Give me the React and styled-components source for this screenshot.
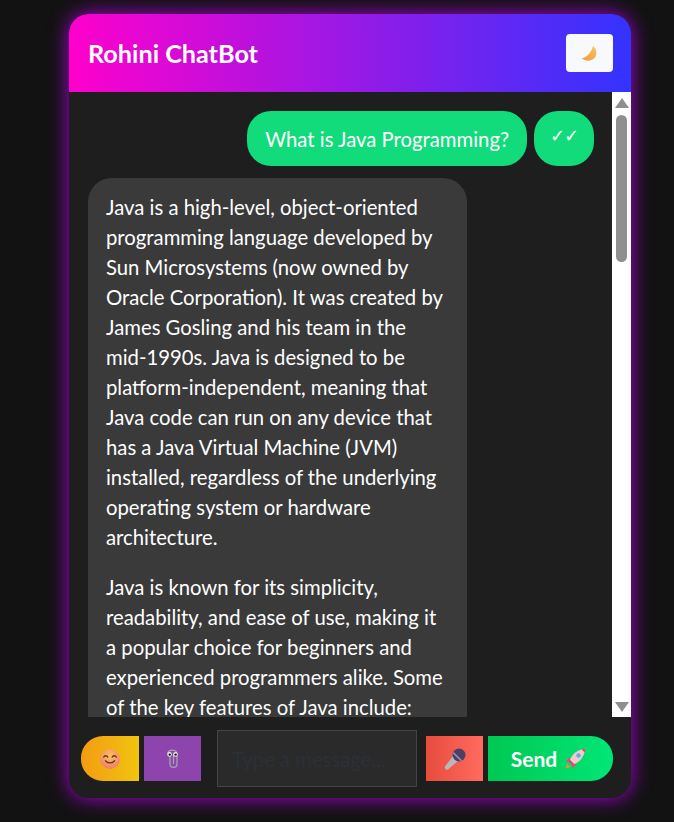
import React from "react";
import styled, { createGlobalStyle } from "styled-components";

const GlobalStyle = createGlobalStyle`
  html, body {
    margin: 0;
    height: 100%;
    background: #121212;
    overflow: hidden;
    font-family: "Lato", "Noto Sans", "Liberation Sans", sans-serif;
  }
`;

const Page = styled.div`
  height: 822px;
  padding: 14px 0 0 69px;
  box-sizing: border-box;
`;

const Card = styled.div`
  width: 562px;
  height: 784px;
  display: flex;
  flex-direction: column;
  border-radius: 20px;
  overflow: hidden;
  background: #1e1e1e;
  box-shadow: 0 0 20px #a800d8;
`;

const Header = styled.header`
  flex: 0 0 78px;
  display: flex;
  align-items: center;
  justify-content: space-between;
  padding: 0 18px 0 19px;
  background: linear-gradient(90deg, #ff00cc, #3333ff);
`;

const Title = styled.h1`
  margin: 0;
  font-size: 25.2px;
  font-weight: 700;
  color: #fff;
`;

const ThemeButton = styled.button`
  width: 47px;
  height: 38px;
  border: 0;
  border-radius: 4px;
  background: #f8f9fa;
  padding: 0;
  display: flex;
  align-items: center;
  justify-content: center;
`;

const Body = styled.div`
  flex: 1;
  min-height: 0;
  display: flex;
`;

const Messages = styled.div`
  flex: 1;
  min-width: 0;
  overflow: hidden;
  padding: 19px 18px 0 19px;
  color: #fff;
  font-size: 20.3px;
  line-height: 30px;
`;

const ScrollTrack = styled.div`
  flex: 0 0 19px;
  display: flex;
  flex-direction: column;
  align-items: center;
  background: #fff;
  padding: 6px 0 5px;
  box-sizing: border-box;
`;

const Arrow = styled.div`
  width: 0;
  height: 0;
  border-left: 7px solid transparent;
  border-right: 7px solid transparent;
  border-${(p) => (p.$up ? "bottom" : "top")}: 10px solid #8f8f8f;
`;

const ScrollSpace = styled.div`
  flex: 1;
  align-self: stretch;
  padding: 7px 4px 0;
`;

const Thumb = styled.div`
  height: 147px;
  border-radius: 6px;
  background: #8f8f8f;
`;

const UserRow = styled.div`
  display: flex;
  justify-content: flex-end;
  gap: 7px;
  margin: 0 0 12px;
`;

const GreenBubble = styled.div`
  height: 55px;
  box-sizing: border-box;
  padding: 0 18px;
  border-radius: 24px;
  background: #12db7c;
  display: flex;
  align-items: center;
`;

const Ticks = styled(GreenBubble)`
  width: 60px;
  justify-content: center;
  padding: 0 0 8px;
  font-size: 18px;
  letter-spacing: -1px;
`;

const BotBubble = styled.div`
  width: 379px;
  box-sizing: border-box;
  padding: 14px 18px 18px;
  border-radius: 24px;
  background: #3a3a3a;

  p {
    margin: 0 0 20px;
  }
`;

const Footer = styled.form`
  flex: 0 0 81px;
  box-sizing: border-box;
  display: flex;
  align-items: center;
  padding: 2px 18px 0 12px;
`;

const ToolButton = styled.button`
  width: ${(p) => p.$w || 57}px;
  height: 45px;
  border: 0;
  padding: 0;
  font-family: inherit;
  margin-right: 5px;
  background: ${(p) => p.$bg};
  border-radius: ${(p) => p.$radius || 0};
  display: flex;
  align-items: center;
  justify-content: center;
`;

const Input = styled.input`
  width: 200px;
  height: 57px;
  box-sizing: border-box;
  margin: 0 9px 0 11px;
  padding: 0 14px;
  background: #2a2a2a;
  border: 1px solid #444;
  font-family: inherit;
  font-size: 20.3px;
  &::placeholder {
    color: #2a3038;
  }
`;

const SendButton = styled(ToolButton)`
  color: #fff;
  font-size: 21px;
  font-weight: 700;
  gap: 8px;
  margin: 0;
  padding-right: 4px;
`;

const MoonIcon = () => (
  <svg width="17" height="17" viewBox="0 0 17 17">
    <defs>
      <linearGradient id="moon" x1="0" y1="1" x2="1" y2="0">
        <stop offset="0" stopColor="#f2993a" />
        <stop offset="1" stopColor="#fbc564" />
      </linearGradient>
    </defs>
    <path d="M0.5 13.2C5 13 10 8.5 12 1c3.5 3 4.6 8 2 11.6C11 16.6 4.5 16.6 0.5 13.2Z" fill="url(#moon)" />
  </svg>
);

const SmileIcon = () => (
  <svg width="20" height="20" viewBox="0 0 20 20">
    <defs>
      <radialGradient id="face" cx="0.5" cy="0.35" r="0.7">
        <stop offset="0" stopColor="#fdc35c" />
        <stop offset="1" stopColor="#f0786c" />
      </radialGradient>
    </defs>
    <circle cx="10" cy="10" r="10" fill="url(#face)" />
    <g fill="none" stroke="#5a3528" strokeWidth="1.4" strokeLinecap="round">
      <path d="M3.8 8C4.6 6.3 7 6.3 7.8 8" />
      <path d="M12.2 8C13 6.3 15.4 6.3 16.2 8" />
      <path d="M5.5 11.8C7.5 14.6 12.5 14.6 14.5 11.8" />
    </g>
  </svg>
);

const ClipIcon = () => (
  <svg width="14" height="22" viewBox="0 0 14 22">
    <g fill="none" stroke="#a5a5a8" strokeWidth="1.3" strokeLinecap="round">
      <path d="M4 6V16C4 20.5 11 20.5 11 16V6.5C11 1 3 0.5 1.5 5.5" />
      <path d="M7.5 7V15.5" />
    </g>
    <circle cx="3.6" cy="6.4" r="2.3" fill="#e8e8e8" />
    <circle cx="9.4" cy="6.4" r="2.3" fill="#e8e8e8" />
    <circle cx="3.8" cy="6.6" r="1.2" fill="#1c1c20" />
    <circle cx="9.6" cy="6.6" r="1.2" fill="#1c1c20" />
  </svg>
);

const MicIcon = () => (
  <svg width="22" height="22" viewBox="0 0 22 22">
    <path d="M9 8L14 13L4 21.5Q2.6 22 1.5 21Q0.6 20 1 18.6Z" fill="#b9b6bc" />
    <circle cx="15" cy="7" r="6.5" fill="#4b3f63" />
    <path d="M9.2 4.6L17.4 12.8" stroke="#9a8fb0" strokeWidth="1.6" />
  </svg>
);

const RocketIcon = () => (
  <svg width="21" height="21" viewBox="0 0 21 21">
    <path d="M0.5 20.5L2 15.5L5.5 19Z" fill="#f0922e" />
    <path d="M4.5 9.5L1 13.5L6 15Z" fill="#f0447a" />
    <path d="M11.5 16.5L7.5 20L6 15Z" fill="#f0447a" />
    <path d="M5 12C7 6 12 2 20.5 0.5C19 9 15 14 9 16Z" fill="#f4c8d2" />
    <path d="M16.5 1.3L20.5 0.5L19.7 4.5Z" fill="#f2405e" />
    <path d="M5 12L9 16L7 16.5L4.5 14Z" fill="#ee3a72" />
    <circle cx="13.5" cy="7.5" r="2.2" fill="#6fa4e8" />
  </svg>
);

export default function App() {
  return (
    <Page>
      <GlobalStyle />
      <Card>
        <Header>
          <Title>Rohini ChatBot</Title>
          <ThemeButton type="button" aria-label="Toggle theme"><MoonIcon /></ThemeButton>
        </Header>
        <Body>
          <Messages>
            <UserRow>
              <GreenBubble>What is Java Programming?</GreenBubble>
              <Ticks>✓✓</Ticks>
            </UserRow>
            <BotBubble>
              <p>
                Java is a high-level, object-oriented programming language developed by Sun
                Microsystems (now owned by Oracle Corporation). It was created by James Gosling and
                his team in the mid-1990s. Java is designed to be platform-independent, meaning that
                Java code can run on any device that has a Java Virtual Machine (JVM) installed,
                regardless of the underlying operating system or hardware architecture.
              </p>
              <p>
                Java is known for its simplicity, readability, and ease of use, making it a popular
                choice for beginners and experienced programmers alike. Some of the key features of
                Java include:
              </p>
            </BotBubble>
          </Messages>
          <ScrollTrack>
            <Arrow $up />
            <ScrollSpace>
              <Thumb />
            </ScrollSpace>
            <Arrow />
          </ScrollTrack>
        </Body>
        <Footer onSubmit={(e) => e.preventDefault()}>
          <ToolButton type="button" aria-label="Emoji" $w={58} $bg="linear-gradient(90deg, #f39c12, #f1c40f)" $radius="22px 0 0 22px"><SmileIcon /></ToolButton>
          <ToolButton type="button" aria-label="Attach" $bg="#8e44ad"><ClipIcon /></ToolButton>
          <Input placeholder="Type a message..." />
          <ToolButton type="button" aria-label="Voice" $bg="linear-gradient(90deg, #e74c3c, #ff6b5e)"><MicIcon /></ToolButton>
          <SendButton type="submit" $w={125} $bg="linear-gradient(90deg, #00c853, #00e676)" $radius="0 22px 22px 0">Send <RocketIcon /></SendButton>
        </Footer>
      </Card>
    </Page>
  );
}
